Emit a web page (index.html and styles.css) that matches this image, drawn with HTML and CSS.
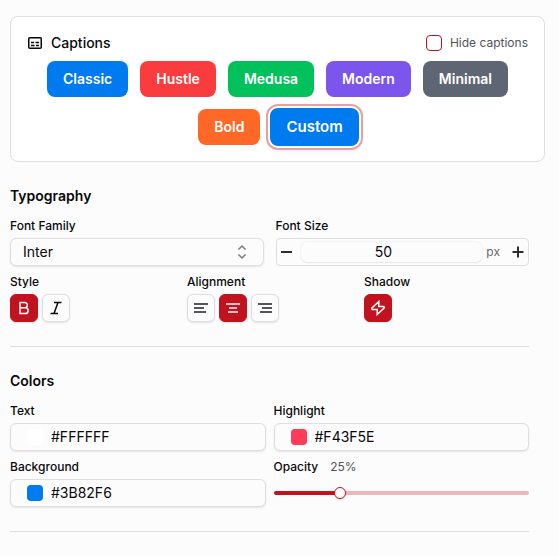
FILE: index.html
```
<!DOCTYPE html>
<html lang="en">
<head>
    <meta charset="UTF-8">
    <meta name="viewport" content="width=device-width, initial-scale=1.0">
    <title>Captions</title>
    <link rel="stylesheet" href="styles.css">
</head>
<body>
    <div class="card">
        <div class="card-header">
            <svg class="icon" width="16" height="16" viewBox="0 0 16 16">
                <rect x="1.75" y="2.75" width="12.5" height="10.5" rx="1"/>
                <path d="M4 7.5h3M8.5 7.5H12M4 10.5h3.5M9 10.5h3"/>
            </svg>
            <h2>Captions</h2>
            <label class="hide-captions"><input type="checkbox" id="chk_hide"> Hide captions</label>
        </div>
        <div class="presets">
            <button type="button" class="preset classic">Classic</button>
            <button type="button" class="preset hustle">Hustle</button>
            <button type="button" class="preset medusa">Medusa</button>
            <button type="button" class="preset modern">Modern</button>
            <button type="button" class="preset minimal">Minimal</button>
            <button type="button" class="preset bold">Bold</button>
            <button type="button" class="preset custom selected">Custom</button>
        </div>
    </div>

    <section>
        <h3>Typography</h3>
        <div class="row two">
            <div class="field">
                <label for="sel_font">Font Family</label>
                <div class="select-wrap">
                    <select id="sel_font" class="control">
                        <option>Inter</option>
                    </select>
                    <svg class="chevrons" width="16" height="16" viewBox="0 0 16 16">
                        <path d="M4.5 5.5L8 2l3.5 3.5M4.5 10.5L8 14l3.5-3.5"/>
                    </svg>
                </div>
            </div>
            <div class="field">
                <label for="txt_size">Font Size</label>
                <div class="stepper">
                    <button type="button" aria-label="Decrease">
                        <svg width="16" height="16" viewBox="0 0 16 16"><path d="M2 8h11"/></svg>
                    </button>
                    <input type="text" id="txt_size" value="50">
                    <span>px</span>
                    <button type="button" aria-label="Increase">
                        <svg width="16" height="16" viewBox="0 0 16 16"><path d="M2.5 8h11M8 2.5v11"/></svg>
                    </button>
                </div>
            </div>
        </div>
        <div class="row three">
            <div class="field">
                <span class="label">Style</span>
                <div class="buttons">
                    <button type="button" class="toggle on" aria-label="Bold">
                        <svg width="16" height="16" viewBox="0 0 16 16"><path d="M4 2.5h4.7a2.6 2.6 0 0 1 0 5.3H4zM4 7.8h5.3a2.8 2.8 0 0 1 0 5.7H4z"/></svg>
                    </button>
                    <button type="button" class="toggle" aria-label="Italic">
                        <svg width="16" height="16" viewBox="0 0 16 16"><path d="M6 2.5h7.5M2.5 13.5H10M10 2.5l-4 11"/></svg>
                    </button>
                </div>
            </div>
            <div class="field">
                <span class="label">Alignment</span>
                <div class="buttons">
                    <button type="button" class="toggle align" aria-label="Align left">
                        <svg width="16" height="16" viewBox="0 0 16 16"><path d="M1 4h14M1 8h10M1 12h12"/></svg>
                    </button>
                    <button type="button" class="toggle align on" aria-label="Align center">
                        <svg width="16" height="16" viewBox="0 0 16 16"><path d="M1 4h14M4 8h8M3 12h10"/></svg>
                    </button>
                    <button type="button" class="toggle align" aria-label="Align right">
                        <svg width="16" height="16" viewBox="0 0 16 16"><path d="M1 4h14M5 8h10M3 12h12"/></svg>
                    </button>
                </div>
            </div>
            <div class="field">
                <span class="label">Shadow</span>
                <div class="buttons">
                    <button type="button" class="toggle on" aria-label="Shadow">
                        <svg width="16" height="16" viewBox="0 0 16 16"><path d="M8.8 1.5L1.7 8.3l.5 1.2h5v5l7.1-6.8-.5-1.2h-5z"/></svg>
                    </button>
                </div>
            </div>
        </div>
    </section>

    <section>
        <h3>Colors</h3>
        <div class="row colors">
            <div class="field">
                <label for="txt_text">Text</label>
                <div class="control color">
                    <span class="swatch white"></span>
                    <input type="text" id="txt_text" value="#FFFFFF">
                </div>
            </div>
            <div class="field">
                <label for="txt_highlight">Highlight</label>
                <div class="control color">
                    <span class="swatch pink"></span>
                    <input type="text" id="txt_highlight" value="#F43F5E">
                </div>
            </div>
            <div class="field">
                <label for="txt_background">Background</label>
                <div class="control color">
                    <span class="swatch blue"></span>
                    <input type="text" id="txt_background" value="#3B82F6">
                </div>
            </div>
            <div class="field">
                <div class="label-row">
                    <label for="rng_opacity">Opacity</label>
                    <output for="rng_opacity">25%</output>
                </div>
                <input type="range" id="rng_opacity" min="0" max="100" value="25">
            </div>
        </div>
    </section>
</body>
</html>
```
FILE: styles.css
```
* {
    box-sizing: border-box;
}

body {
    margin: 0;
    padding: 16px 14px 24px 10px;
    background-color: #fcfcfc;
    color: #09090b;
    font-family: Inter, sans-serif;
    font-size: 14px;
    line-height: 20px;
}

button,
input,
select {
    font-family: inherit;
    font-size: 14px;
    color: inherit;
    margin: 0;
    padding: 0;
}

button {
    cursor: pointer;
}

svg {
    display: block;
    fill: none;
    stroke: currentColor;
    stroke-width: 1.5;
}

h2,
h3 {
    margin: 0;
    font-size: 14px;
    font-weight: 500;
}

.card {
    background-color: #fff;
    border: 1px solid #dfdfe1;
    border-radius: 8px;
    padding: 16px;
}

.card-header {
    display: flex;
    align-items: center;
    gap: 8px;
    margin-bottom: 8px;
}

.hide-captions {
    display: flex;
    align-items: center;
    gap: 8px;
    margin-left: auto;
    font-size: 12px;
    color: #52525b;
}

.hide-captions input {
    appearance: none;
    width: 16px;
    height: 16px;
    border: 1px solid #c1121f;
    border-radius: 4px;
    background-color: #fff;
}

.presets {
    display: flex;
    flex-wrap: wrap;
    justify-content: center;
    gap: 12px;
}

.preset {
    height: 36px;
    padding: 0 16px 2px;
    border: none;
    border-radius: 8px;
    color: #fff;
    font-weight: 600;
}

.classic,
.custom {
    background-color: #007aef;
}

.hustle {
    background-color: #fa3c3f;
}

.medusa {
    background-color: #00c15c;
}

.modern {
    background-color: #7c55ed;
}

.minimal {
    background-color: #5f6673;
}

.bold {
    background-color: #ff6827;
}

.preset.selected {
    height: 38px;
    margin: -1px -2px;
    font-size: 15px;
    box-shadow: 0 0 0 2px #fff, 0 0 0 4px #e6a0a5, 0 4px 6px rgba(0, 0, 0, 0.1);
}

section {
    margin-right: 16px;
    padding: 24px 0;
    border-bottom: 1px solid #dfdfe1;
}

h3 {
    font-weight: 600;
    margin-bottom: 12px;
}

.row {
    display: grid;
    gap: 8px 12px;
}

.row + .row {
    margin-top: 8px;
}

.two {
    grid-template-columns: 1fr 1fr;
}

.three {
    grid-template-columns: 1fr 1fr 1fr;
}

.colors {
    grid-template-columns: 1fr 1fr;
    gap: 8px;
}

.field {
    display: flex;
    flex-direction: column;
    gap: 4px;
    min-width: 0;
}

.field label,
.label {
    font-size: 12px;
    line-height: 16px;
    font-weight: 500;
}

.label-row {
    display: flex;
    gap: 12px;
    font-size: 12px;
    line-height: 16px;
}

.label-row output {
    color: #52525b;
}

.control {
    width: 100%;
    height: 28px;
    border: 1px solid #dfdfe1;
    border-radius: 6px;
    background-color: #fcfcfc;
    box-shadow: 0 1px 2px rgba(0, 0, 0, 0.1);
}

.select-wrap {
    position: relative;
}

select.control {
    display: block;
    appearance: none;
    padding: 0 12px 2px;
}

.chevrons {
    position: absolute;
    right: 14px;
    top: 6px;
    color: #7b7b80;
    pointer-events: none;
}

.stepper {
    display: flex;
    align-items: center;
    height: 28px;
    border: 1px solid #dfdfe1;
    border-radius: 4px;
}

.stepper button {
    display: flex;
    align-items: center;
    justify-content: center;
    flex: none;
    width: 20px;
    height: 20px;
    border: none;
    background: none;
    color: #2f2f33;
}

.stepper input {
    flex: 1;
    min-width: 0;
    height: 20px;
    margin: 0 4px;
    padding: 0 16px 2px 0;
    border: none;
    border-radius: 6px;
    background-color: #fcfcfc;
    box-shadow: 0 0 2px rgba(0, 0, 0, 0.1), 0 1px 1px rgba(0, 0, 0, 0.06);
    text-align: center;
}

.stepper span {
    margin-right: 8px;
    font-size: 12px;
    color: #66666e;
}

.buttons {
    display: flex;
    gap: 4px;
}

.toggle {
    display: flex;
    align-items: center;
    justify-content: center;
    width: 28px;
    height: 28px;
    border: 1px solid #dfdfe1;
    border-radius: 6px;
    background-color: #fcfcfc;
    box-shadow: 0 1px 2px rgba(0, 0, 0, 0.1);
}

.toggle.align {
    color: #55555a;
}

.toggle.align svg,
.stepper svg {
    stroke-width: 2;
}

.toggle.on {
    border-color: #c1121f;
    background-color: #c1121f;
    color: #fff;
}

.toggle.align.on {
    color: #efbfc3;
}

.color {
    display: flex;
    align-items: center;
    gap: 8px;
    padding: 0 16px;
}

.color input {
    flex: 1;
    min-width: 0;
    height: 20px;
    padding-bottom: 2px;
    border: none;
    background: none;
}

.swatch {
    flex: none;
    width: 16px;
    height: 16px;
    border-radius: 4px;
}

.white {
    background-color: #fff;
}

.pink {
    background-color: #ff3b57;
}

.blue {
    background-color: #007aef;
}

input[type="range"] {
    appearance: none;
    width: 100%;
    height: 28px;
    background: none;
}

/* 25% of the track minus the thumb, plus half a thumb */
input[type="range"]::-webkit-slider-runnable-track {
    height: 4px;
    border-radius: 2px;
    background: linear-gradient(to right, #c1121f calc(25% + 3px), #edb6b9 calc(25% + 3px));
}

input[type="range"]::-webkit-slider-thumb {
    appearance: none;
    width: 12px;
    height: 12px;
    margin-top: -4px;
    border: 1px solid #c1121f;
    border-radius: 50%;
    background-color: #fff;
    box-shadow: 0 1px 2px rgba(0, 0, 0, 0.15);
}
```
